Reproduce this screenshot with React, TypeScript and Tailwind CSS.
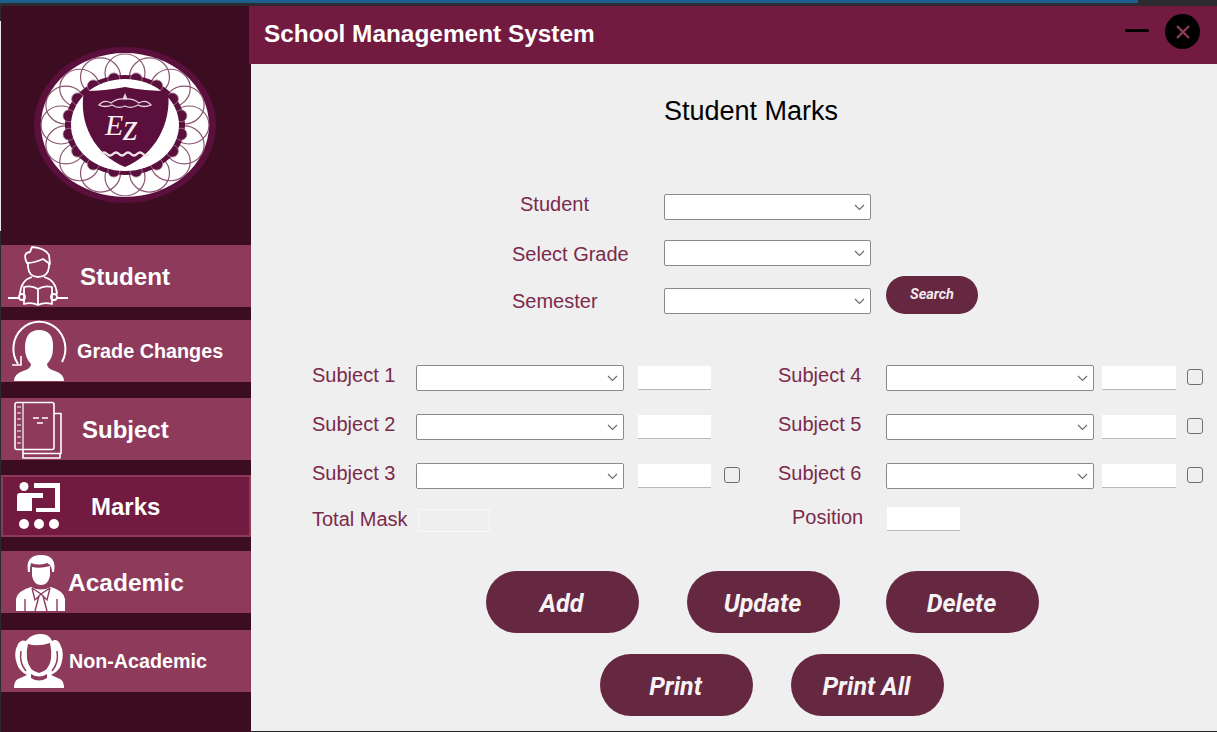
const sans = "font-['Liberation_Sans',Arial,sans-serif]";

function Logo() {
  const outer = Array.from({ length: 16 }, (_, i) => (i * Math.PI * 2) / 16);
  const inner = Array.from({ length: 16 }, (_, i) => ((i + 0.5) * Math.PI * 2) / 16);
  return (
    <svg width="184" height="160" viewBox="0 0 184 160" aria-hidden>
      <ellipse cx="92" cy="80" rx="91" ry="78" fill="#5a0f3c" />
      <ellipse cx="92" cy="80" rx="84" ry="72" fill="#ffffff" />
      {outer.map((a) => (
        <ellipse
          key={a}
          cx={92 + 64 * Math.cos(a)}
          cy={80 + 52 * Math.sin(a)}
          rx="20"
          ry="19"
          fill="none"
          stroke="#8a5570"
          strokeWidth="1.2"
        />
      ))}
      <ellipse cx="92" cy="80" rx="60" ry="50" fill="#5a0f3c" />
      {inner.map((a) => (
        <circle key={a} cx={92 + 57 * Math.cos(a)} cy={80 + 47 * Math.sin(a)} r="6" fill="#5a0f3c" stroke="#a98095" strokeWidth="0.8" />
      ))}
      <ellipse cx="92" cy="80" rx="54" ry="46" fill="#ffffff" />
      <path d="M51 46 Q72 46 92 42 Q112 46 135 46 C139 78 122 110 92 122 C62 110 45 78 51 46Z" fill="#5a0f3c" />
      <path d="M66 60 Q71 54 78 58 Q84 53 92 54 Q100 53 106 58 Q113 54 118 60 Q111 63 105 60 Q98 64 92 61 Q85 64 79 60 Q72 63 66 60Z" fill="none" stroke="#e7d4de" strokeWidth="1.3" />
      <path d="M92 48 L94.5 54 L89.5 54Z" fill="#e7d4de" />
      <text x="72" y="90" fill="#f5eef2" fontFamily="'Liberation Serif',serif" fontStyle="italic" fontSize="30">E</text>
      <text x="90" y="95" fill="#f5eef2" fontFamily="'Liberation Serif',serif" fontStyle="italic" fontSize="38">z</text>
      <path d="M68 109 q3 -3 6 0 t6 0 t6 0 t6 0 t6 0 t6 0 t6 0 t6 0" fill="none" stroke="#efe3e9" strokeWidth="2.4" />
    </svg>
  );
}

function StudentIcon() {
  return (
    <svg width="62" height="60" viewBox="0 0 62 60" fill="none" stroke="#fff" strokeWidth="1.8" strokeLinejoin="round" aria-hidden>
      <path d="M20 17 Q15 7 23 6 L25 1 Q38 2 42 9 L43 18 L36 13 Q27 17 20 17Z" />
      <path d="M21 16 V21 Q22 31 31 31 Q41 31 42 21 V17" />
      <path d="M25 31 Q14 34 13 48 M37 31 Q49 34 50 48" />
      <path d="M17 41 Q25 39 31 43 Q37 39 45 41 V58 Q37 56 31 59 Q25 56 17 58Z M31 43 V59" />
      <path d="M1 52 H13 M49 52 H61" />
      <circle cx="15" cy="51" r="3" />
      <circle cx="47" cy="51" r="3" />
    </svg>
  );
}

function GradeIcon() {
  return (
    <svg width="58" height="62" viewBox="0 0 58 62" fill="none" aria-hidden>
      <path d="M7 44 A26 27 0 1 1 51 42" stroke="#fff" strokeWidth="2" />
      <path d="M1 45 H10 L10 36" stroke="#fff" strokeWidth="1.6" />
      <path d="M28 10 Q43 10 42 28 Q42 38 36 44 Q36 49 44 51 Q53 54 53 61 H3 Q3 54 12 51 Q20 49 20 44 Q14 38 14 28 Q14 10 28 10Z" fill="#fff" />
    </svg>
  );
}

function SubjectIcon() {
  return (
    <svg width="50" height="60" viewBox="0 0 50 60" fill="none" stroke="#fff" strokeWidth="1.6" strokeLinejoin="round" aria-hidden>
      <rect x="1" y="3.5" width="39" height="47" rx="2" />
      <path d="M40 14.5 H47 V54.5 H9 V50.5 M9 54.5 V59 H46 V54.5" />
      <path d="M9 3.5 V50.5 M3 8 H7 M3 14 H7 M3 20 H7 M3 26 H7 M3 32 H7 M3 38 H7 M3 44 H7" strokeWidth="1.2" />
      <path d="M19 19 H25 M28 19 H34 M23 24 H29" strokeWidth="1.3" />
    </svg>
  );
}

function MarksIcon() {
  return (
    <svg width="46" height="50" viewBox="0 0 46 50" fill="#fff" className="mt-[2px]" aria-hidden>
      <circle cx="8" cy="4.5" r="4.5" />
      <path d="M1 14 Q1 11 4 11 H27 V16 H16 V29 H1Z" />
      <path d="M18 1 H44 V30 H20 V26 H39 V6 H18Z" />
      <circle cx="8" cy="42" r="5" />
      <circle cx="23" cy="42" r="5" />
      <circle cx="38" cy="42" r="5" />
    </svg>
  );
}

function AcademicIcon() {
  return (
    <svg width="52" height="60" viewBox="0 0 52 60" aria-hidden>
      <path d="M13 20 Q10 3 26 3 Q42 3 39 20 L37 20 Q37 13 32 11 Q24 14 16 11 Q15 14 15 20Z" fill="#fff" />
      <path d="M17 15 Q25 17 35 14 V24 Q33 33 26 33 Q19 33 17 24Z" fill="#fff" />
      <path d="M1 59 V47 Q2 39 16 35 Q26 40 36 35 Q49 39 50 47 V59Z" fill="#fff" />
      <path d="M17 36 L26 42 L35 36 M17 36 L20 48 L26 42 L32 48 L35 36 M24 44 L20 59 M28 44 L32 59 M10 47 V59 M42 47 V59" fill="none" stroke="#8e3a5b" strokeWidth="1.4" />
    </svg>
  );
}

function NonAcademicIcon() {
  return (
    <svg width="52" height="56" viewBox="0 0 52 56" aria-hidden>
      <path d="M26 1 Q36 0 39 8 Q44 5 47 11 Q52 20 48 32 Q46 38 38 42 L47 46 Q51 48 51 55 H1 Q1 48 5 46 L14 42 Q6 38 4 31 Q0 20 5 11 Q8 6 13 8 Q17 2 26 1Z" fill="#fff" />
      <path d="M15 11 Q25 14 37 10 Q39 18 38 26 Q36 38 26 40 Q16 38 14 26 Q13 18 15 11Z" fill="#8e3a5b" />
      <path d="M18 41 Q26 46 34 41 V45 Q26 50 18 45Z" fill="#8e3a5b" />
      <path d="M8 18 Q6 30 13 38 M44 18 Q46 30 39 38" fill="none" stroke="#8e3a5b" strokeWidth="1.5" />
    </svg>
  );
}

function NavItem({ icon, label, labelClass, active, className }: { icon: React.ReactNode; label: string; labelClass: string; active?: boolean; className: string }) {
  return (
    <div
      className={`relative flex h-[62px] items-center font-bold text-white ${active ? "border-2 border-[#8e3a5b] bg-[#721a3f]" : "bg-[#8e3a5b]"} ${className}`}
    >
      {icon}
      <span className={`pt-[2px] ${labelClass}`}>{label}</span>
    </div>
  );
}

function Select({ className = "w-[208px]" }: { className?: string }) {
  return (
    <div className={`flex h-[26px] shrink-0 items-center justify-end rounded-[2px] border border-[#8a8a8a] bg-white pr-[5px] ${className}`}>
      <svg width="11" height="7" viewBox="0 0 11 7" fill="none" stroke="#6b6b6b" strokeWidth="1.1" aria-hidden>
        <path d="M1 1 L5.5 5.5 L10 1" />
      </svg>
    </div>
  );
}

function Mark({ className }: { className: string }) {
  return <div className={`mt-px h-[24px] shrink-0 border-b border-[#b9b9b9] bg-white ${className}`} />;
}

function Check({ className }: { className: string }) {
  return <div className={`mt-[4px] h-4 w-4 shrink-0 rounded-[3px] border border-[#6f6f6f] ${className}`} />;
}

function Label({ children, className }: { children: string; className: string }) {
  return <span className={`shrink-0 text-[20px] leading-[24px] text-[#7b2a4b] ${className}`}>{children}</span>;
}

function SubjectRow({ left, right, leftCheck, className }: { left: string; right: string; leftCheck?: boolean; className: string }) {
  return (
    <div className={`flex items-start ${className}`}>
      <Label className="-mt-[2px] ml-[61px] w-[104px]">{left}</Label>
      <Select />
      <Mark className="ml-[14px] w-[73px]" />
      <div className="w-[67px] shrink-0">{leftCheck && <Check className="ml-[13px]" />}</div>
      <Label className="-mt-[2px] w-[108px]">{right}</Label>
      <Select />
      <Mark className="ml-[8px] w-[74px]" />
      <Check className="ml-[11px]" />
    </div>
  );
}

function ActionButton({ children, className }: { children: string; className: string }) {
  return (
    <button className={`flex h-[62px] w-[153px] items-center justify-center rounded-full bg-[#652840] pt-[3px] pr-[2px] font-['Roboto',sans-serif] text-[25px] font-bold text-[#f7f2f4] italic ${className}`}>
      {children}
    </button>
  );
}

export default function App() {
  return (
    <div className={`flex h-[732px] w-[1217px] flex-col overflow-hidden bg-[#2b2b30] ${sans}`}>
      <div className="h-[6px] shrink-0">
        <div className="h-[3px] w-[1138px] bg-[#1b5f8f]" />
      </div>
      <div className="flex min-h-0 flex-1">
        <div className="flex w-px shrink-0 flex-col">
          <div className="mt-[15px] h-[210px] bg-[#e8e8e8]" />
        </div>
        <aside className="flex w-[250px] shrink-0 flex-col bg-[#3c0d20]">
          <div className="mt-[39px] ml-[32px] h-[160px]">
            <Logo />
          </div>
          <NavItem
            className="mt-[40px]"
            icon={<div className="ml-[6px] w-[73px]"><StudentIcon /></div>}
            label="Student"
            labelClass="text-[24.2px]"
          />
          <NavItem
            className="mt-[13px]"
            icon={<div className="ml-[10px] w-[66px]"><GradeIcon /></div>}
            label="Grade Changes"
            labelClass="text-[19.8px]"
          />
          <NavItem
            className="mt-[16px]"
            icon={<div className="ml-[13px] w-[68px]"><SubjectIcon /></div>}
            label="Subject"
            labelClass="text-[24px]"
          />
          <NavItem
            active
            className="mt-[15px]"
            icon={<div className="ml-[13px] w-[75px]"><MarksIcon /></div>}
            label="Marks"
            labelClass="text-[24px]"
          />
          <NavItem
            className="mt-[14px]"
            icon={<div className="ml-[14px] w-[53px]"><AcademicIcon /></div>}
            label="Academic"
            labelClass="text-[24.5px]"
          />
          <NavItem
            className="mt-[17px]"
            icon={<div className="ml-[12px] w-[56px]"><NonAcademicIcon /></div>}
            label="Non-Academic"
            labelClass="text-[19.7px]"
          />
        </aside>
        <div className="relative flex min-w-0 flex-1 flex-col bg-[#efefef]">
          <header className="-ml-[2px] flex h-[58px] shrink-0 items-center bg-[#721a3f] pr-[17px] pl-[15px]">
            <h1 className="-mt-[2px] text-[24.4px] font-bold text-white">School Management System</h1>
            <div className="mt-[-10px] ml-auto h-[3px] w-6 rounded-full bg-black" />
            <div className="mt-[-7px] ml-[16px] flex h-[35px] w-[35px] items-center justify-center rounded-full bg-black">
              <svg width="16" height="16" viewBox="0 0 16 16" stroke="#8e3a5b" strokeWidth="2.4" aria-hidden>
                <path d="M2 2 L14 14 M14 2 L2 14" />
              </svg>
            </div>
          </header>

          <h2 className="mt-[31px] ml-[413px] text-[27px] leading-[32px] text-black">Student Marks</h2>

          <div className="mt-[67px] flex items-start">
            <Label className="mt-[-2px] ml-[269px] w-[144px]">Student</Label>
            <Select className="w-[207px]" />
          </div>
          <div className="mt-[20px] flex items-start">
            <Label className="mt-[2px] ml-[261px] w-[152px]">Select Grade</Label>
            <Select className="w-[207px]" />
          </div>
          <div className="mt-[22px] flex items-start">
            <Label className="mt-[1px] ml-[261px] w-[152px]">Semester</Label>
            <Select className="w-[207px]" />
            <button className="mt-[-12px] ml-[15px] flex h-[38px] w-[92px] items-center justify-center rounded-full bg-[#652840] font-['Roboto',sans-serif] text-[14.5px] font-bold text-[#f3e9ed] italic">
              Search
            </button>
          </div>

          <SubjectRow className="mt-[51px]" left="Subject 1" right="Subject 4" />
          <SubjectRow className="mt-[23px]" left="Subject 2" right="Subject 5" />
          <SubjectRow className="mt-[23px]" left="Subject 3" right="Subject 6" leftCheck />

          <div className="mt-[20px] flex items-start">
            <Label className="mt-[-2px] ml-[61px] w-[106px]">Total Mask</Label>
            <div className="h-[23px] w-[72px] shrink-0 border border-[#f8f8f8]" />
            <Label className="mt-[-4px] ml-[302px] w-[95px]">Position</Label>
            <div className="-mt-[2px] h-[24px] w-[73px] shrink-0 border-b border-[#b9b9b9] bg-white" />
          </div>

          <div className="mt-[39px] flex">
            <ActionButton className="ml-[235px]">Add</ActionButton>
            <ActionButton className="ml-[48px]">Update</ActionButton>
            <ActionButton className="ml-[46px]">Delete</ActionButton>
          </div>
          <div className="mt-[21px] flex">
            <ActionButton className="ml-[349px]">Print</ActionButton>
            <ActionButton className="ml-[38px]">Print All</ActionButton>
          </div>
          <div className="absolute right-0 bottom-0 left-0 h-px bg-[#222]" />
        </div>
      </div>
    </div>
  );
}
